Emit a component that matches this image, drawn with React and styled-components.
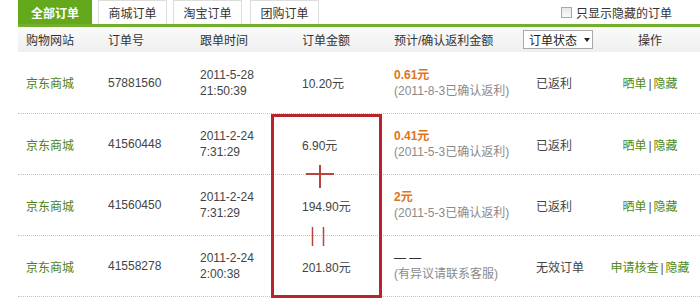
import React from "react";
import styled, { createGlobalStyle } from "styled-components";

const GlobalStyle = createGlobalStyle`
  html, body {
    margin: 0;
    padding: 0;
    background: #ffffff;
  }
  body {
    font-family: "Liberation Sans", "Noto Sans CJK SC", sans-serif;
    font-size: 12px;
    color: #333;
  }
`;

const COLS = "82px 92px 102px 92px 129px 85px 100px";

const orders = [
  {
    id: "57881560",
    date: "2011-5-28",
    time: "21:50:39",
    amount: "10.20元",
    rebate: "0.61元",
    note: "(2011-8-3已确认返利)",
    status: "已返利",
    action: "晒单",
  },
  {
    id: "41560448",
    date: "2011-2-24",
    time: "7:31:29",
    amount: "6.90元",
    rebate: "0.41元",
    note: "(2011-5-3已确认返利)",
    status: "已返利",
    action: "晒单",
  },
  {
    id: "41560450",
    date: "2011-2-24",
    time: "7:31:29",
    amount: "194.90元",
    rebate: "2元",
    note: "(2011-5-3已确认返利)",
    status: "已返利",
    action: "晒单",
  },
  {
    id: "41558278",
    date: "2011-2-24",
    time: "2:00:38",
    amount: "201.80元",
    rebate: "— —",
    note: "(有异议请联系客服)",
    status: "无效订单",
    action: "申请核查",
    dash: true,
  },
];

const App = () => {
  return (
    <Page>
      <GlobalStyle />
      <TabBar>
        <Tab active>全部订单</Tab>
        <Tab>商城订单</Tab>
        <Tab gap={8}>淘宝订单</Tab>
        <Tab>团购订单</Tab>
        <HiddenToggle>
          <Box />
          只显示隐藏的订单
        </HiddenToggle>
      </TabBar>

      <HeadRow>
        <Cell>购物网站</Cell>
        <Cell>订单号</Cell>
        <Cell>跟单时间</Cell>
        <Cell>订单金额</Cell>
        <Cell>预计/确认返利金额</Cell>
        <Cell>
          <Select>
            订单状态
            <Caret />
          </Select>
        </Cell>
        <Cell center>操作</Cell>
      </HeadRow>

      {orders.map((o, i) => (
        <Row key={o.id} first={i === 0}>
          <Cell>
            <Site>京东商城</Site>
          </Cell>
          <Cell>{o.id}</Cell>
          <Cell>
            <Lines>
              <span>{o.date}</span>
              <span>{o.time}</span>
            </Lines>
          </Cell>
          <Cell>{o.amount}</Cell>
          <Cell>
            <Lines>
              <Rebate dash={o.dash}>{o.rebate}</Rebate>
              <Note>{o.note}</Note>
            </Lines>
          </Cell>
          <Cell indent={21}>{o.status}</Cell>
          <Cell center>
            <Link>{o.action}</Link>
            <Sep>|</Sep>
            <Link>隐藏</Link>
          </Cell>
        </Row>
      ))}

      <Marks>
        <RedBox />
        <MarkSvg width="700" height="298" viewBox="0 0 700 298">
          <line x1="306" y1="174" x2="334" y2="174" stroke="#b8443f" strokeWidth="2" />
          <line x1="320" y1="165" x2="320" y2="188" stroke="#b8443f" strokeWidth="2" />
          <line x1="312.5" y1="227" x2="312.5" y2="246" stroke="#b8443f" strokeWidth="1.5" />
          <line x1="323.5" y1="227" x2="323.5" y2="246" stroke="#b8443f" strokeWidth="1.5" />
        </MarkSvg>
      </Marks>
    </Page>
  );
};
export default App;

const Page = styled.div`
  position: relative;
  width: 700px;
  height: 298px;
  overflow: hidden;
  padding-left: 18px;
  box-sizing: border-box;
`;

const TabBar = styled.div`
  display: flex;
  align-items: flex-end;
  height: 24px;
  border-bottom: 3px solid #72b02c;
`;

const Tab = styled.div`
  width: ${(p) => (p.active ? 74 : 69)}px;
  height: 24px;
  margin-right: ${(p) => p.gap || 6}px;
  box-sizing: border-box;
  display: flex;
  align-items: center;
  justify-content: center;
  font-size: 12px;
  background: ${(p) => (p.active ? "#64a81c" : "#fff")};
  color: ${(p) => (p.active ? "#fff" : "#333")};
  font-weight: ${(p) => (p.active ? "bold" : "normal")};
  border: ${(p) => (p.active ? "none" : "1px solid #dcdcdc")};
  border-bottom: none;
`;

const HiddenToggle = styled.label`
  margin-left: auto;
  margin-right: 28px;
  align-self: center;
  display: flex;
  align-items: center;
  gap: 4px;
  color: #333;
`;

const Box = styled.span`
  width: 9px;
  height: 9px;
  border: 1px solid #a8a8a8;
  background: linear-gradient(#e8e8e8, #fafafa);
`;

const HeadRow = styled.div`
  display: grid;
  grid-template-columns: ${COLS};
  height: 25px;
  align-items: center;
  background: linear-gradient(#fafafa, #efefef);
  color: #333;
`;

const Row = styled.div`
  display: grid;
  grid-template-columns: ${COLS};
  height: ${(p) => (p.first ? 61 : 60)}px;
  align-items: center;
  border-bottom: 1px dotted #c4c4c4;
  color: #444;
`;

const Cell = styled.div`
  padding-left: ${(p) => (p.center ? 0 : p.indent || 8)}px;
  text-align: ${(p) => (p.center ? "center" : "left")};
  white-space: nowrap;
`;

const Select = styled.div`
  width: 70px;
  height: 19px;
  box-sizing: border-box;
  border: 1px solid #a9a9a9;
  background: #fff;
  display: flex;
  align-items: center;
  padding-left: 5px;
  gap: 7px;
  color: #222;
`;

const Caret = styled.span`
  width: 0;
  height: 0;
  border-left: 3.5px solid transparent;
  border-right: 3.5px solid transparent;
  border-top: 4px solid #222;
`;

const Site = styled.span`
  color: #4e7f1e;
`;

const Lines = styled.div`
  display: flex;
  flex-direction: column;
  line-height: 16px;
`;

const Rebate = styled.span`
  color: ${(p) => (p.dash ? "#333" : "#e0741a")};
  font-weight: ${(p) => (p.dash ? "normal" : "bold")};
`;

const Note = styled.span`
  color: #8a8a8a;
`;

const Link = styled.span`
  color: #4f8a16;
`;

const Sep = styled.span`
  color: #555;
  margin: 0 2px;
`;

const Marks = styled.div`
  position: absolute;
  inset: 0;
  pointer-events: none;
`;

const RedBox = styled.div`
  position: absolute;
  left: 271px;
  top: 114px;
  width: 111px;
  height: 184px;
  box-sizing: border-box;
  border: 3px solid #b9242b;
`;

const MarkSvg = styled.svg`
  position: absolute;
  left: 0;
  top: 0;
`;
